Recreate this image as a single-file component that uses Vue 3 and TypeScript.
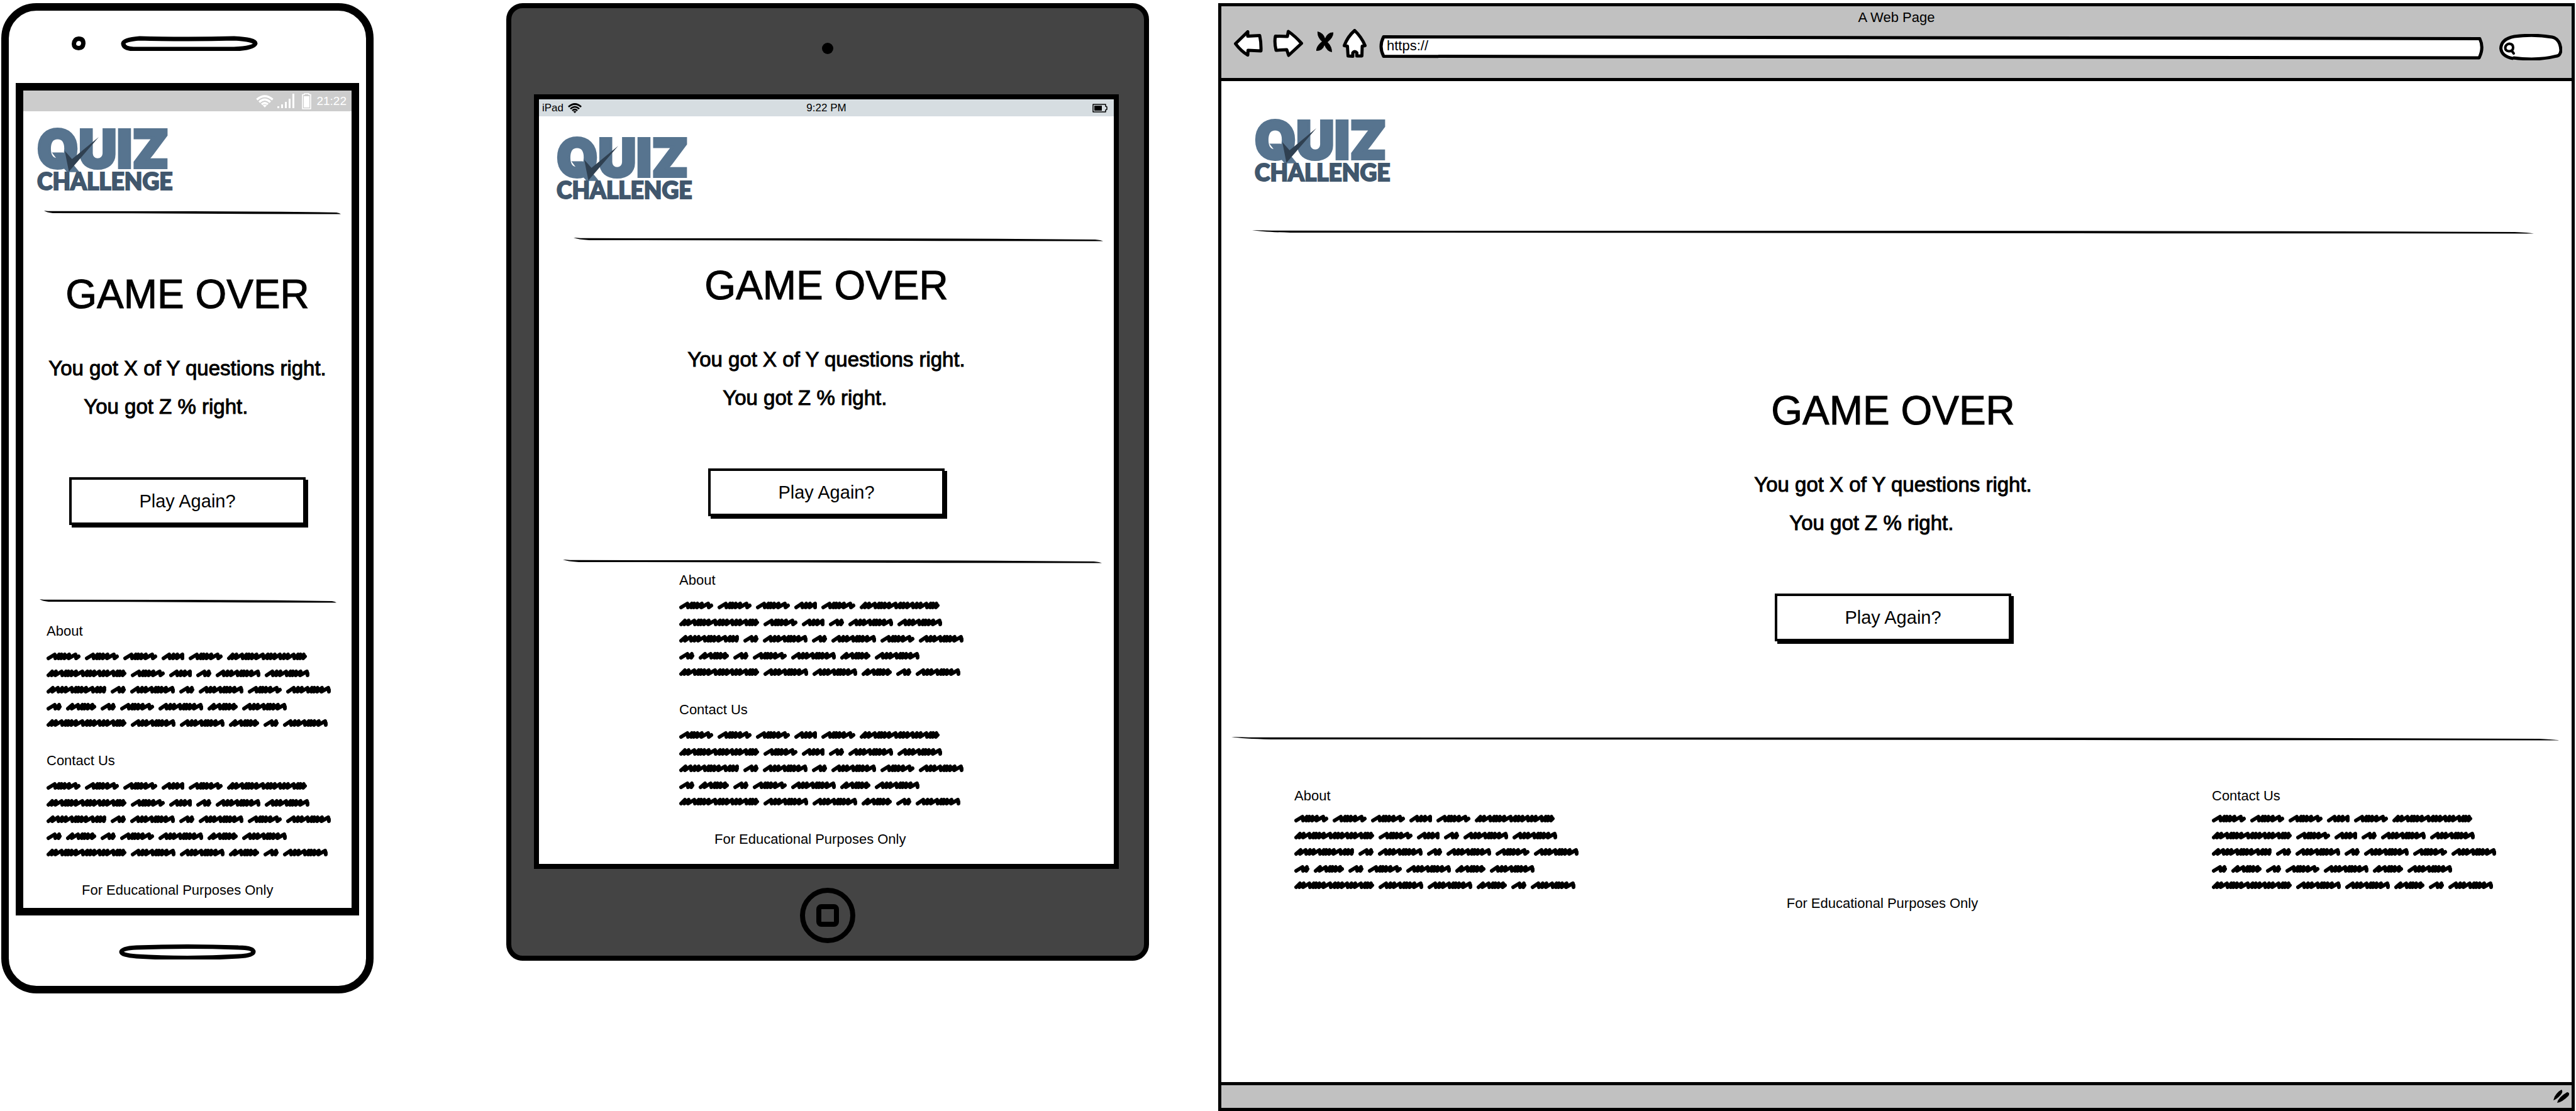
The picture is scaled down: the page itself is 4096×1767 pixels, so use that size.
<script setup lang="ts">
// Widths of the scribbled placeholder words, row by row.
const scribbleRows: number[][] = [
  [54, 54, 54, 36, 54, 127],
  [127, 54, 36, 24, 71, 71],
  [95, 24, 71, 24, 71, 54, 71],
  [24, 48, 24, 54, 71, 48, 71],
  [127, 71, 71, 48, 24, 71],
]
const rowCentres: number[] = [14, 41, 67, 94, 120]
const WORD_GAP = 7
const STROKES: number[] = [5, 7, 4, 5, 8, 4, 3, 4, 6, 9, 5, 4]

/** A slanted zigzag between x and x + width around the line y. */
function scribbleWord(x: number, y: number, width: number): string {
  const left = x + 3
  const right = x + width - 3
  let path = `M${left} ${y + 3}`
  let at = left
  let i = width % 5
  while (at < right - 5) {
    const rise = STROKES[i % STROKES.length]
    const peak = Math.min(at + rise + 2, right)
    path += `L${peak} ${y - 3}`
    at = Math.min(peak - (rise > 6 ? -1 : 1), right)
    path += `L${at} ${y + 3}`
    i += 1
  }
  return path + `L${right} ${y}`
}

const scribblePath: string = scribbleRows
  .map((row, r) => {
    let x = 0
    return row
      .map((width) => {
        const d = scribbleWord(x, rowCentres[r], width)
        x += width + WORD_GAP
        return d
      })
      .join('')
  })
  .join('')
</script>

<template>
  <svg class="defs" aria-hidden="true">
    <symbol id="rule" viewBox="0 0 1000 7" preserveAspectRatio="none">
      <path d="M0 0 Q12 1 28 1 L500 1.2 L800 2 L985 3.4 Q996 4.5 1000 6.4 L990 6.4 L700 6 L300 5 L30 4.6 Q8 3.5 0 0Z" />
    </symbol>
    <symbol id="scribble" viewBox="0 0 454 134">
      <path :d="scribblePath" fill="none" stroke="#000" stroke-width="6" stroke-linejoin="round" stroke-linecap="round" />
    </symbol>
    <symbol id="wifi" viewBox="0 0 28 20">
      <g fill="none" stroke="currentColor" stroke-width="3.4">
        <path d="M1.4 7.4 Q14 -3.6 26.6 7.4" />
        <path d="M5.2 11.4 Q14 3.2 22.8 11.4" />
        <path d="M9 15 Q14 10.4 19 15" />
      </g>
      <path d="M10.8 16.6 Q14 14.4 17.2 16.6 L14 20Z" fill="currentColor" />
    </symbol>
    <symbol id="check" viewBox="0 0 218 102">
      <path d="M44 40 L55.500 53 L98 18 L50.500 73Z" fill="#2f4051" />
    </symbol>
  </svg>

  <main class="board">
    <section class="phone" aria-label="Phone">
      <div class="phone-top">
        <svg class="lens" viewBox="0 0 22 22"><path d="M11 3.500 Q18.500 3.500 18.500 11 Q18 18.500 11 18.500 Q3.500 18 3.500 12 Q4 4 11 3.500Z" /></svg>
        <svg class="slot" viewBox="0 0 218 24"><path d="M30 4 Q109 6 180 4 Q214 6 214 12 Q212 20 180 21 H20 Q4 20 4 12 Q5 6 30 4Z" /></svg>
      </div>
      <div class="phone-screen">
        <div class="phone-status">
          <svg class="phone-wifi"><use href="#wifi" /></svg>
          <svg class="phone-signal" viewBox="0 0 27 23"><path d="M0 20h3v3h-3z M6 17h3v6h-3z M12 13h3v10h-3z M18 8h3v15h-3z M24 0h3v23h-3z" fill="#fff" /></svg>
          <svg class="phone-battery" viewBox="0 0 15 26"><path d="M4 2.500 V1 H11 V2.500 H14 V25 H1 V2.500Z" fill="none" stroke="#fff" stroke-width="1.600" stroke-linejoin="round" /><path d="M3 5h9v18h-9z" fill="#fff" /></svg>
          <time>21:22</time>
        </div>
        <header class="logo">
          <span class="logo-quiz">QUIZ</span>
          <span class="logo-challenge">CHALLENGE</span>
          <svg class="logo-check"><use href="#check" /></svg>
        </header>
        <svg class="rule phone-rule-top"><use href="#rule" /></svg>
        <div class="result">
          <h1>GAME OVER</h1>
          <div class="score">
            <p>You got X of Y questions right.</p>
            <p class="percent">You got Z % right.</p>
          </div>
          <button type="button">Play Again?</button>
        </div>
        <svg class="rule phone-rule-bottom"><use href="#rule" /></svg>
        <footer class="stack">
          <section class="blurb">
            <h2>About</h2>
            <svg class="scribble"><use href="#scribble" /></svg>
          </section>
          <section class="blurb">
            <h2>Contact Us</h2>
            <svg class="scribble"><use href="#scribble" /></svg>
          </section>
          <p class="notice">For Educational Purposes Only</p>
        </footer>
      </div>
      <div class="phone-bottom">
        <svg class="slot" viewBox="0 0 218 24"><path d="M28 5 Q109 2 190 5 Q214 5 214 12 Q213 18 190 19 Q109 24 28 19 Q4 17 4 12 Q5 6 28 5Z" /></svg>
      </div>
    </section>

    <section class="tablet" aria-label="Tablet">
      <div class="tablet-top"><span class="tablet-lens"></span></div>
      <div class="tablet-screen">
        <div class="tablet-status">
          <span class="carrier">iPad <svg class="tablet-wifi"><use href="#wifi" /></svg></span>
          <time>9:22 PM</time>
          <span class="charge">
            <svg viewBox="0 0 24 14"><path d="M1 1 H21 V4 L23 5 V9 L21 10 V13 H1Z" fill="none" stroke="#000" stroke-width="1.500" stroke-linejoin="round" /><path d="M3 3h12v8h-12z" /></svg>
          </span>
        </div>
        <header class="logo">
          <span class="logo-quiz">QUIZ</span>
          <span class="logo-challenge">CHALLENGE</span>
          <svg class="logo-check"><use href="#check" /></svg>
        </header>
        <svg class="rule tablet-rule-top"><use href="#rule" /></svg>
        <div class="result">
          <h1>GAME OVER</h1>
          <div class="score">
            <p>You got X of Y questions right.</p>
            <p class="percent">You got Z % right.</p>
          </div>
          <button type="button">Play Again?</button>
        </div>
        <svg class="rule tablet-rule-bottom"><use href="#rule" /></svg>
        <footer class="stack">
          <section class="blurb">
            <h2>About</h2>
            <svg class="scribble"><use href="#scribble" /></svg>
          </section>
          <section class="blurb">
            <h2>Contact Us</h2>
            <svg class="scribble"><use href="#scribble" /></svg>
          </section>
          <p class="notice">For Educational Purposes Only</p>
        </footer>
      </div>
      <div class="tablet-bottom">
        <button type="button" class="home-key" aria-label="Home"><span></span></button>
      </div>
    </section>

    <section class="browser" aria-label="Browser">
      <header class="chrome">
        <div class="title">A Web Page</div>
        <div class="toolbar">
          <button type="button" class="tool back" aria-label="Back">
            <svg viewBox="0 0 46 42"><path d="M2.500 21.500 L22 2.500 V9.500 L41 8.500 Q43.500 20 43 33 L22.500 32 L22 39.500 Q12 34 2.500 21.500Z" /></svg>
          </button>
          <button type="button" class="tool forward" aria-label="Forward">
            <svg viewBox="0 0 48 44"><path d="M4 10.500 L23 11 L24.500 3 Q36 11 45.500 22 L25 41 L22 32 L5 33 Q2 20 4 10.500Z" /></svg>
          </button>
          <button type="button" class="tool stop" aria-label="Stop">
            <svg viewBox="0 0 28 34"><path class="solid" d="M2 0 Q11 2 14 11 Q18 1 27 1.500 Q28 9 18 17 Q25 24 25 33 Q17 32 13 22 Q10 31 0 31 Q-1 24 9 16 Q1 9 2 0Z" /></svg>
          </button>
          <button type="button" class="tool home" aria-label="Home page">
            <svg viewBox="0 0 38 46"><path d="M19 2.500 Q30 13 35.500 26.500 L31 27.500 L30.500 43 H22.500 V38 Q19 34 16 38 V43.500 L8.500 43 L7.500 27.500 L2.500 26.500 Q8 12 19 2.500Z" /></svg>
          </button>
          <div class="address">
            <svg viewBox="0 0 1757 39" preserveAspectRatio="none"><path d="M7 2.500 L1750 5.500 Q1757 20 1749 36 L7 33.500 Q-1 18 7 2.500Z" /></svg>
            <input type="text" value="https://" aria-label="Address" />
          </div>
          <div class="search">
            <svg viewBox="0 0 100 42"><path d="M22 39 Q4 36 2.500 23 Q3 8 24 4 Q55 0 84 5 Q97 8 98 26 Q97 34 92 35 Q62 43 22 38" /><path class="glass" d="M16 15.500 Q22 16 22 21.500 Q22 27.500 15.500 27.500 Q9.500 27 9.500 22 Q10 16.500 16 15.500Z M20 27 L23 31" /></svg>
            <input type="search" aria-label="Search" />
          </div>
        </div>
      </header>
      <div class="page">
        <header class="logo">
          <span class="logo-quiz">QUIZ</span>
          <span class="logo-challenge">CHALLENGE</span>
          <svg class="logo-check"><use href="#check" /></svg>
        </header>
        <svg class="rule page-rule-top"><use href="#rule" /></svg>
        <div class="result">
          <h1>GAME OVER</h1>
          <div class="score">
            <p>You got X of Y questions right.</p>
            <p class="percent">You got Z % right.</p>
          </div>
          <button type="button">Play Again?</button>
        </div>
        <svg class="rule page-rule-bottom"><use href="#rule" /></svg>
        <footer class="columns">
          <section class="blurb">
            <h2>About</h2>
            <svg class="scribble"><use href="#scribble" /></svg>
          </section>
          <p class="notice">For Educational Purposes Only</p>
          <section class="blurb">
            <h2>Contact Us</h2>
            <svg class="scribble"><use href="#scribble" /></svg>
          </section>
        </footer>
      </div>
      <div class="grip-bar">
        <svg viewBox="0 0 26 22"><path d="M0 17 Q3 5 13 0 Q16 3 12 8 Q5 16 0 17Z M6 21 Q8 12 22 4 Q27 5 24 10 Q14 20 6 21Z" /></svg>
      </div>
    </section>
  </main>
</template>

<style>
body {
  margin: 0;
  background: #fff;
}
</style>

<style scoped>
.defs {
  position: absolute;
  width: 0;
  height: 0;
}

.board {
  display: grid;
  grid-template-columns: 592fr 211fr 1022fr 110fr 2157fr;
  align-items: start;
  padding: 5px 2px 0;
  color: #000;
  font-family: "Liberation Sans", Arial, sans-serif;
  font-size: 22px;
  line-height: 28px;
}

.phone {
  grid-column: 1;
}

.tablet {
  grid-column: 3;
}

.browser {
  grid-column: 5;
}

svg {
  display: block;
}

h1,
h2,
p {
  margin: 0;
  font-weight: 400;
}

/* shared wireframe content */
.logo {
  position: relative;
  display: flex;
  flex-direction: column;
  width: 224px;
  height: 104px;
  font-weight: 900;
}

.logo-quiz {
  height: 71px;
  color: #57748f;
  font-family: Inter, "Open Sans", sans-serif;
  font-size: 84px;
  line-height: 73px;
  -webkit-text-stroke: 4px #57748f;
}

.logo-challenge {
  height: 33px;
  color: #41576d;
  font-family: Lato, "Open Sans", sans-serif;
  font-size: 37px;
  line-height: 33px;
  -webkit-text-stroke: 2px #41576d;
}

.logo-check {
  position: absolute;
  top: 0;
  left: 0;
  width: 218px;
  height: 102px;
}

.rule {
  height: 6px;
}

.result {
  display: flex;
  flex-direction: column;
  align-items: center;
}

h1 {
  font-size: 64px;
  line-height: 72px;
  -webkit-text-stroke: 1px #000;
}

.score {
  margin: 51px 0 82px;
  font-size: 33px;
  line-height: 61px;
  -webkit-text-stroke: 1px #000;
}

.percent {
  padding-left: 56px;
}

.result button {
  width: 376px;
  height: 76px;
  padding: 0;
  border: 4px solid #000;
  background: #fff;
  box-shadow: 4px 4px 0 #000;
  color: #000;
  font: inherit;
  font-size: 29px;
}

h2 {
  font-size: 22px;
  line-height: 28px;
}

.scribble {
  width: 454px;
  height: 134px;
  margin-top: 12px;
}

.stack {
  display: flex;
  flex-direction: column;
  gap: 32px;
}

.notice {
  white-space: nowrap;
}

.stack .notice {
  padding-left: 56px;
}

/* phone */
.phone {
  border: 12px solid #000;
  border-radius: 56px;
}

.phone-top {
  display: flex;
  align-items: center;
  gap: 56px;
  height: 103px;
  padding: 0 0 12px 100px;
}

.lens {
  width: 22px;
  height: 22px;
}

.slot {
  width: 218px;
  height: 24px;
}

.lens path,
.slot path {
  fill: #fff;
  stroke: #000;
  stroke-width: 7;
}

.phone-screen {
  margin: 0 11px;
  padding-bottom: 14px;
  border: 12px solid #000;
}

.phone-status {
  display: flex;
  align-items: center;
  justify-content: flex-end;
  height: 33px;
  padding-right: 8px;
  background: #ccc;
  color: #fff;
  font-size: 19px;
}

.phone-wifi {
  width: 28px;
  height: 20px;
}

.phone-signal {
  width: 27px;
  height: 23px;
  margin: 0 12px 0 6px;
}

.phone-battery {
  width: 15px;
  height: 26px;
  margin-right: 8px;
}

.phone-screen .logo {
  margin: 23px 0 0 22px;
}

.phone-rule-top {
  width: calc(100% - 50px);
  margin: 31px 17px 91px 33px;
}

.phone-rule-bottom {
  width: calc(100% - 50px);
  margin: 118px 24px 31px 26px;
}

.phone-screen .stack {
  padding-left: 37px;
}

.phone-bottom {
  display: flex;
  justify-content: center;
  padding: 46px 0 42px;
}

/* tablet */
.tablet {
  border: 8px solid #000;
  border-radius: 26px;
  background: #444;
}

.tablet-top {
  display: flex;
  justify-content: center;
  padding: 55px 0 64px;
}

.tablet-lens {
  width: 18px;
  height: 18px;
  border-radius: 50%;
  background: #000;
}

.tablet-screen {
  margin: 0 40px 0 36px;
  padding-bottom: 25px;
  border: 8px solid #000;
  background: #fff;
}

.tablet-status {
  display: grid;
  grid-template-columns: 1fr auto 1fr;
  align-items: center;
  height: 27px;
  padding: 0 5px;
  background: #d6dde1;
  font-size: 17px;
  line-height: 20px;
}

.carrier {
  display: flex;
  gap: 6px;
  align-items: center;
}

.tablet-wifi {
  width: 24px;
  height: 16px;
}

.charge {
  justify-self: end;
  padding-right: 5px;
}

.charge svg {
  width: 24px;
  height: 14px;
}

.tablet-screen .logo {
  margin: 29px 0 0 28px;
}

.tablet-rule-top {
  width: calc(100% - 72px);
  margin: 60px 17px 34px 55px;
}

.tablet-rule-bottom {
  width: calc(100% - 57px);
  margin: 69px 19px 13px 38px;
}

.tablet-screen .stack {
  width: 468px;
  margin: 0 auto;
}

.tablet-bottom {
  display: flex;
  justify-content: center;
  padding: 30px 0 20px;
}

.home-key {
  display: grid;
  place-items: center;
  width: 88px;
  height: 88px;
  padding: 0;
  border: 8px solid #000;
  border-radius: 50%;
  background: #444;
}

.home-key span {
  width: 20px;
  height: 20px;
  border: 8px solid #000;
  border-radius: 8px;
}

/* browser window */
.browser {
  border: 5px solid #000;
}

.chrome {
  height: 114px;
  border-bottom: 5px solid #000;
  background: #c1c1c1;
}

.title {
  padding-top: 4px;
  text-align: center;
}

.toolbar {
  display: flex;
  align-items: center;
  padding: 0 15px 0 20px;
}

.tool {
  padding: 0;
  border: 0;
  background: none;
}

.tool path,
.address path,
.search path {
  fill: #fff;
  stroke: #000;
  stroke-width: 5;
  stroke-linejoin: round;
}

.tool .solid {
  fill: #000;
  stroke: none;
}

.back svg {
  width: 46px;
  height: 42px;
}

.forward svg {
  width: 48px;
  height: 44px;
}

.stop svg {
  width: 28px;
  height: 34px;
}

.home svg {
  width: 38px;
  height: 46px;
}

.back {
  margin-right: 16px;
}

.forward {
  margin-right: 21px;
}

.stop {
  margin: 0 14px 4px 0;
}

.home {
  margin-right: 20px;
}

.address,
.search {
  display: grid;
}

.address > *,
.search > * {
  grid-area: 1 / 1;
}

.address {
  flex: 1;
  height: 39px;
  margin: 12px 24px 0 0;
}

.address svg {
  width: 100%;
  height: 39px;
}

.address path {
  vector-effect: non-scaling-stroke;
}

.search {
  width: 100px;
  height: 42px;
  margin-top: 12px;
}

.search svg {
  width: 100px;
  height: 42px;
}

.search .glass {
  fill: none;
  stroke-width: 4;
  stroke-linecap: round;
}

.address input,
.search input {
  width: 100%;
  min-width: 0;
  box-sizing: border-box;
  padding: 0 12px 4px;
  border: 0;
  background: none;
  color: #000;
  font: inherit;
}

.search input {
  padding-left: 30px;
}

.page .logo {
  margin: 57px 0 0 53px;
}

.page-rule-top {
  width: calc(100% - 109px);
  margin: 76px 60px 245px 49px;
}

.page .result {
  padding-right: 11px;
}

.page-rule-bottom {
  width: calc(100% - 36px);
  margin: 152px 20px 74px 16px;
}

.columns {
  display: flex;
  justify-content: space-between;
  padding: 0 118px 270px 116px;
}

.columns .scribble {
  margin-top: 8px;
}

.columns .notice {
  padding: 171px 43px 0 0;
}

.grip-bar {
  display: flex;
  align-items: center;
  justify-content: flex-end;
  height: 36px;
  padding-right: 3px;
  border-top: 5px solid #000;
  background: #c1c1c1;
}

.grip-bar svg {
  width: 26px;
  height: 22px;
}
</style>
